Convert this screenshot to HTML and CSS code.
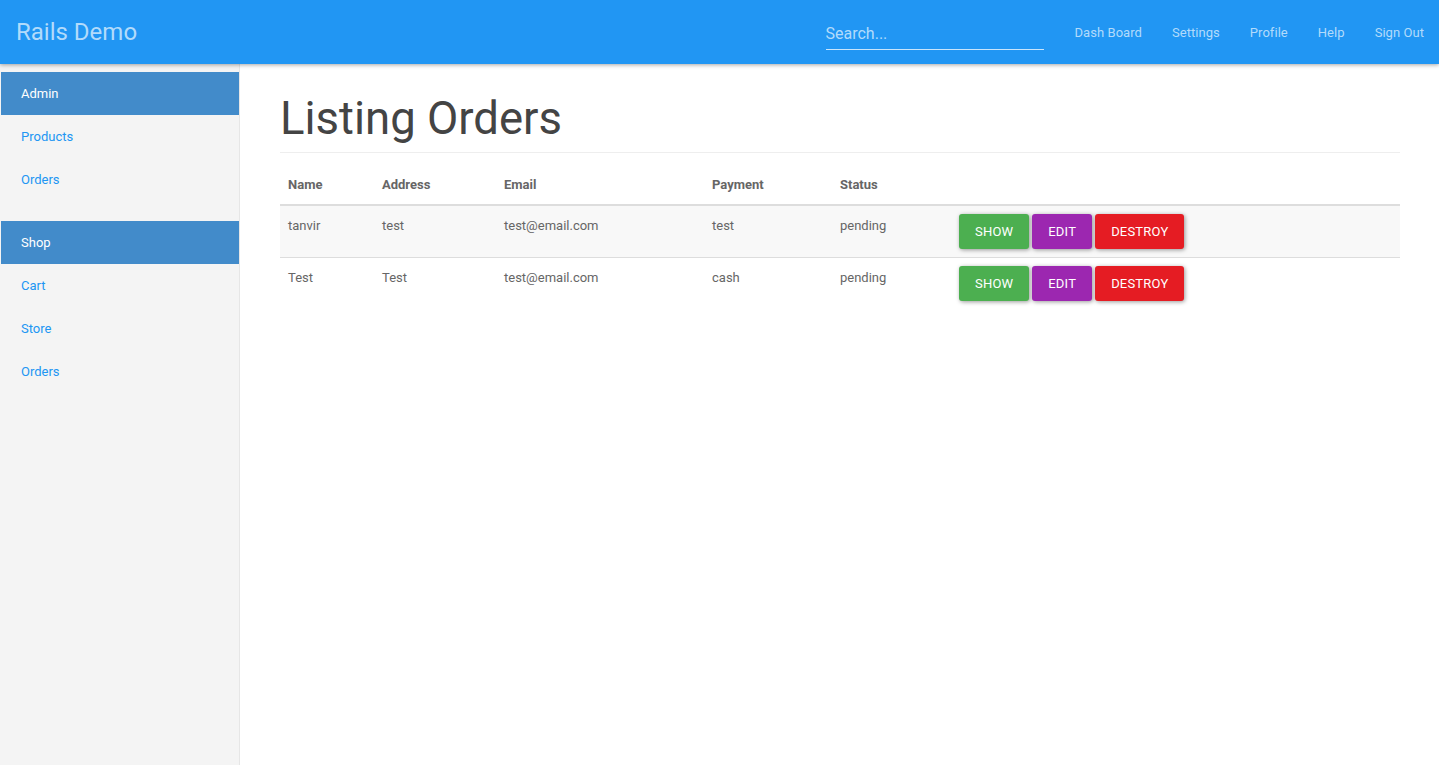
FILE: index.html
```html
<!DOCTYPE html>
<html lang="en">
<head>
<meta charset="utf-8">
<title>Rails Demo</title>
<link rel="stylesheet" href="styles.css">
</head>
<body>
<header class="navbar">
  <a class="brand" href="#">Rails Demo</a>
  <div class="spacer"></div>
  <div class="search"><input class="search-input" type="text" placeholder="Search..."></div>
  <ul class="nav">
    <li><a href="#">Dash Board</a></li>
    <li><a href="#">Settings</a></li>
    <li><a href="#">Profile</a></li>
    <li><a href="#">Help</a></li>
    <li><a href="#">Sign Out</a></li>
  </ul>
</header>
<div class="layout">
  <aside class="sidebar">
    <ul class="side-group">
      <li class="side-item active">Admin</li>
      <li class="side-item"><a href="#">Products</a></li>
      <li class="side-item"><a href="#">Orders</a></li>
    </ul>
    <ul class="side-group">
      <li class="side-item active">Shop</li>
      <li class="side-item"><a href="#">Cart</a></li>
      <li class="side-item"><a href="#">Store</a></li>
      <li class="side-item"><a href="#">Orders</a></li>
    </ul>
  </aside>
  <main class="main">
    <div class="page-header"><h1 class="title">Listing Orders</h1></div>
    <table class="table">
      <thead>
        <tr>
          <th class="c-name">Name</th>
          <th class="c-addr">Address</th>
          <th class="c-email">Email</th>
          <th class="c-pay">Payment</th>
          <th class="c-status">Status</th>
          <th></th>
        </tr>
      </thead>
      <tbody>
        <tr class="striped">
          <td>tanvir</td>
          <td>test</td>
          <td>test@email.com</td>
          <td>test</td>
          <td>pending</td>
          <td><div class="actions"><a class="btn btn-success" href="#">Show</a><a class="btn btn-info" href="#">Edit</a><a class="btn btn-danger" href="#">Destroy</a></div></td>
        </tr>
        <tr>
          <td>Test</td>
          <td>Test</td>
          <td>test@email.com</td>
          <td>cash</td>
          <td>pending</td>
          <td><div class="actions"><a class="btn btn-success" href="#">Show</a><a class="btn btn-info" href="#">Edit</a><a class="btn btn-danger" href="#">Destroy</a></div></td>
        </tr>
      </tbody>
    </table>
  </main>
</div>
</body>
</html>
```
FILE: styles.css
```css
* { box-sizing: border-box; }
html, body { margin: 0; padding: 0; }
body {
  font-family: Roboto, "Liberation Sans", Arial, sans-serif;
  font-size: 13px;
  line-height: 1.846;
  color: #666666;
  background: #ffffff;
}
a { text-decoration: none; }

.navbar {
  position: relative;
  z-index: 2;
  display: flex;
  align-items: center;
  height: 64px;
  background: #2196f3;
  box-shadow: 0 1px 4px rgba(0, 0, 0, 0.35);
}
.brand {
  padding-left: 16px;
  font-size: 24px;
  line-height: 64px;
  color: #b2dbfb;
}
.spacer { flex: 1; }
.search {
  width: 218px;
  margin-right: 16px;
  border-bottom: 1px solid #c9e5fc;
}
.search-input {
  display: block;
  width: 100%;
  height: 35px;
  padding: 4px 0 0;
  border: 0;
  outline: none;
  background: transparent;
  font-family: Roboto, "Liberation Sans", Arial, sans-serif;
  font-size: 16px;
  color: #ffffff;
}
.search-input::placeholder { color: #b2dbfb; opacity: 1; }
.nav {
  display: flex;
  list-style: none;
  margin: 0;
  padding: 0;
}
.nav a {
  display: block;
  padding: 1px 15px 0;
  line-height: 63px;
  letter-spacing: 0.05px;
  color: #b2dbfb;
}

.layout { display: flex; align-items: flex-start; }
.sidebar {
  width: 240px;
  height: 701px;
  padding: 8px 0 0 1px;
  background: #f4f4f4;
  border-right: 1px solid #e6e6e6;
}
.side-group {
  list-style: none;
  margin: 0 0 20px;
  padding: 0;
}
.side-item {
  height: 43px;
  line-height: 43px;
  padding-left: 20px;
}
.side-item a { color: #2196f3; }
.side-item.active {
  background: #428bca;
  color: #ffffff;
}

.main {
  flex: 1;
  padding: 30px 39px 0 40px;
}
.page-header {
  padding-bottom: 8px;
  border-bottom: 1px solid #eeeeee;
  margin-bottom: 12px;
}
.title {
  margin: 0;
  font-size: 45.5px;
  font-weight: 400;
  line-height: 1.1;
  color: #444444;
}

.table {
  width: 100%;
  border-collapse: collapse;
}
.table th {
  text-align: left;
  font-weight: 700;
  color: #666666;
  padding: 8px 8px 7px;
  line-height: 24px;
  border-bottom: 2px solid #dddddd;
}
.table td {
  padding: 8px;
  line-height: 24px;
  vertical-align: top;
  border-top: 1px solid #dddddd;
}
.table tbody tr:first-child td { border-top: 0; }
.striped { background: #f8f8f8; }
.c-name { width: 94px; }
.c-addr { width: 122px; }
.c-email { width: 208px; }
.c-pay { width: 128px; }
.c-status { width: 119px; }

.actions { display: flex; gap: 3px; }
.btn {
  display: block;
  padding: 6px 16px;
  line-height: 23px;
  font-size: 13px;
  letter-spacing: 0.2px;
  text-transform: uppercase;
  color: #ffffff;
  border-radius: 3px;
  box-shadow: 1px 1px 4px rgba(0, 0, 0, 0.4);
}
.btn-success { background: #4caf50; }
.btn-info { background: #9c27b0; }
.btn-danger { background: #e51c23; }
```
